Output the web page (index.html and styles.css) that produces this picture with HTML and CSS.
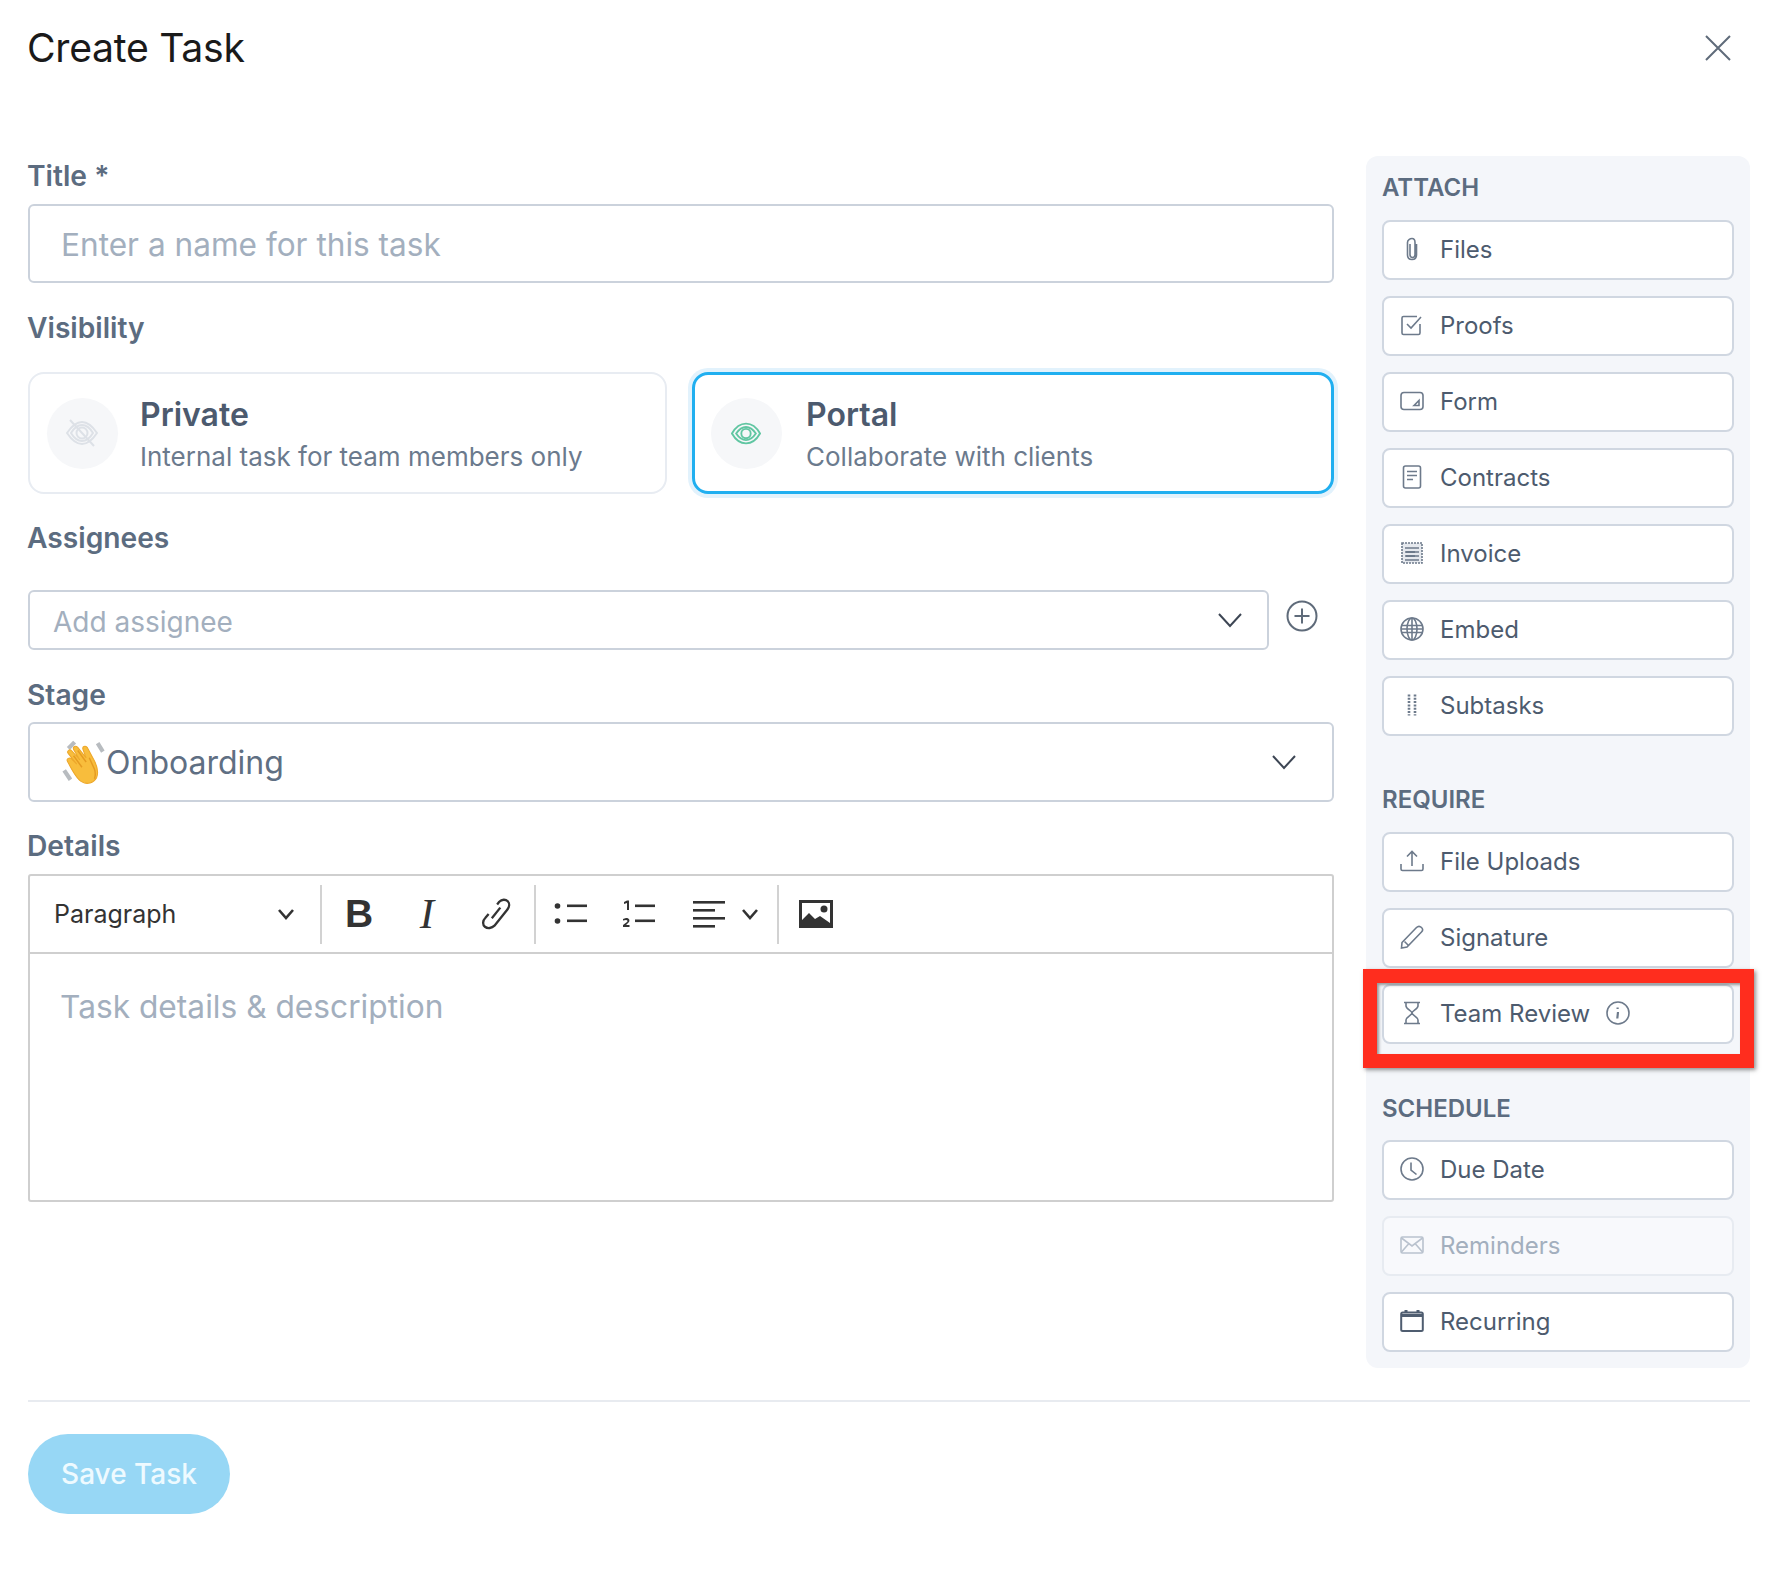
FILE: index.html
```html
<!DOCTYPE html>
<html lang="en">
<head>
<meta charset="utf-8">
<title>Create Task</title>
<link rel="stylesheet" href="styles.css">
</head>
<body>
<div class="modal">
  <header class="head">
    <h1 class="head-title">Create Task</h1>
    <svg class="close" viewBox="0 0 28 28"><path d="M2 2l24 24M26 2L2 26"/></svg>
  </header>
  <div class="body">
    <main class="form">
      <div class="label l-title">Title *</div>
      <div class="field f-title">Enter a name for this task</div>
      <div class="label l-vis">Visibility</div>
      <div class="cards">
        <div class="card">
          <div class="bubble">
            <svg class="eye off" viewBox="0 0 32 32"><path d="M1 16C5 10 10 5 16 5s11 5 15 11c-4 6-9 11-15 11S5 22 1 16z"/><path d="M5 16c3-5 7-8 11-8s8 3 11 8c-3 5-7 8-11 8s-8-3-11-8z"/><circle cx="16" cy="16" r="5.5"/><path d="M4 3l24 26"/></svg>
          </div>
          <div class="card-text"><div class="card-name">Private</div><div class="card-sub">Internal task for team members only</div></div>
        </div>
        <div class="card on">
          <div class="bubble">
            <svg class="eye" viewBox="0 0 32 24"><path d="M1 12C5 5 10 1.500 16 1.500S27 5 31 12c-4 7-9 10.500-15 10.500S5 19 1 12z"/><path d="M5.500 12C8.500 7.500 12 5 16 5s7.500 2.500 10.500 7C23.500 16.500 20 19 16 19s-7.500-2.500-10.500-7z"/><circle cx="16" cy="12" r="5"/></svg>
          </div>
          <div class="card-text"><div class="card-name">Portal</div><div class="card-sub">Collaborate with clients</div></div>
        </div>
      </div>
      <div class="label l-assign">Assignees</div>
      <div class="assign-row">
        <div class="field f-assign"><span>Add assignee</span><svg class="chev" viewBox="0 0 26 16"><path d="M2 2l11 12L24 2"/></svg></div>
        <svg class="plus" viewBox="0 0 32 32"><circle cx="16" cy="16" r="14.500"/><path d="M16 8.500v15M8.500 16h15"/></svg>
      </div>
      <div class="label l-stage">Stage</div>
      <div class="field f-stage">
        <span class="stage-val">
          <svg class="wave" viewBox="0 0 44 44">
            <path class="wave-m" d="M14 3l-6 6M36 4l5 8M4 30l6 9"/>
            <path class="wave-h" d="M7 21c-1-2 2-4 4-2l5 5-8-10c-2-2 1-5 3-3l8 9-6-10c-1-3 2-4 4-2l8 10-3-8c-1-3 2-4 4-2l7 13c3 6 4 11 2 16-3 5-9 7-14 4-5-2-10-12-14-20z"/>
            <path class="wave-l" d="M28 18l5 11c1 3 1 6 0 9M13 16l8 11M17 11l8 11"/>
          </svg>
          <span>Onboarding</span>
        </span>
        <svg class="chev" viewBox="0 0 26 16"><path d="M2 2l11 12L24 2"/></svg>
      </div>
      <div class="label l-details">Details</div>
      <div class="editor">
        <div class="toolbar">
          <div class="tb-para"><span>Paragraph</span><svg class="mini" viewBox="0 0 18 12"><path d="M2 2l7 8 7-8"/></svg></div>
          <i class="tb-div"></i>
          <div class="tb-group g-a">
            <span class="tb-btn tb-b">B</span>
            <span class="tb-btn tb-i">I</span>
            <span class="tb-btn"><svg class="tool line" viewBox="0 0 32 32"><path d="M18 7l2-2.500c2.500-2.500 6-2.500 8-.5s1.500 5.500-.5 8l-12 15c-2.500 2.500-6.500 3-9 1s-2-6 .5-8.500l3-3.500"/><path d="M13 20l8-10"/></svg></span>
          </div>
          <i class="tb-div"></i>
          <div class="tb-group g-b">
            <span class="tb-btn"><svg class="tool" viewBox="0 0 34 28"><circle cx="3.500" cy="6" r="2.800"/><circle cx="3.500" cy="21" r="2.800"/><rect x="13" y="4.500" width="20" height="2.600"/><rect x="13" y="19.500" width="20" height="2.600"/></svg></span>
            <span class="tb-btn"><svg class="tool" viewBox="0 0 34 28"><rect x="13" y="4.500" width="20" height="2.600"/><rect x="13" y="19.500" width="20" height="2.600"/><path d="M2 2l3-1.500h2v9.500H5V3L2 4zM1 27v-2l4-3c1-1 .5-2-1-2l-3 .5V19l3-1c3 0 4 2 3 4l-3 3h3.500v2z"/></svg></span>
            <span class="tb-btn tb-align"><svg class="tool" viewBox="0 0 32 28"><rect x="0" y="1" width="32" height="2.600"/><rect x="0" y="9" width="22" height="2.600"/><rect x="0" y="17" width="32" height="2.600"/><rect x="0" y="25" width="22" height="2.600"/></svg><svg class="mini" viewBox="0 0 18 12"><path d="M2 2l7 8 7-8"/></svg></span>
          </div>
          <i class="tb-div"></i>
          <div class="tb-group g-c">
            <span class="tb-btn"><svg class="tool tool-img" viewBox="0 0 34 28"><path fill-rule="evenodd" d="M0 0h34v28H0zM3 3v17l7-7 6 6 5-3 10 7V3z"/><circle cx="25" cy="9" r="3.500"/></svg></span>
          </div>
        </div>
        <div class="editor-body">Task details &amp; description</div>
      </div>
    </main>
    <aside class="side">
      <div class="side-h">ATTACH</div>
      <div class="side-list">
        <div class="opt"><svg class="ic" viewBox="0 0 24 24"><path d="M10 7v10.500c0 2 1 3 2.500 3s2.500-1 2.500-3V5.500C15 3 14 1.500 12 1.500S7.500 3 7.500 5.500V18c0 3 2 4.500 4.500 4.500s4.500-1.500 4.500-4.500V7"/></svg><span>Files</span></div>
        <div class="opt"><svg class="ic" viewBox="0 0 24 24"><path d="M20 11v9c0 1-.6 1.500-1.500 1.500h-15C2.600 21.500 2 21 2 20V5c0-1 .6-1.500 1.500-1.500H17"/><path d="M7 11l4 4 10-11"/></svg><span>Proofs</span></div>
        <div class="opt"><svg class="ic" viewBox="0 0 24 24"><rect x="1" y="3.500" width="22" height="17" rx="3"/><path d="M14 16.500l5-5v5z"/></svg><span>Form</span></div>
        <div class="opt"><svg class="ic" viewBox="0 0 24 24"><rect x="3.500" y="1" width="17" height="22" rx="2"/><path d="M7 6.500h10M7 10.500h10M7 14.500h6"/></svg><span>Contracts</span></div>
        <div class="opt"><svg class="ic" viewBox="0 0 24 24"><rect x="2" y="2" width="20" height="20" fill="#e6e9ee" stroke-dasharray="2 1"/><path d="M5 7h14M5 11h14M5 15h14M5 19h14"/><path class="strong" d="M6 11h9M6 15h9"/></svg><span>Invoice</span></div>
        <div class="opt"><svg class="ic" viewBox="0 0 24 24"><circle cx="12" cy="12" r="11"/><ellipse cx="12" cy="12" rx="5" ry="11"/><path d="M12 1v22M1.500 8.500h21M1.500 15.500h21M1 12h22"/></svg><span>Embed</span></div>
        <div class="opt"><svg class="ic" viewBox="0 0 24 24"><path d="M9 1.500v21M15 1.500v21" stroke-width="2.600" stroke-dasharray="2 1.300"/></svg><span>Subtasks</span></div>
      </div>
      <div class="side-h h-2">REQUIRE</div>
      <div class="side-list">
        <div class="opt"><svg class="ic" viewBox="0 0 24 24"><path d="M1 15v5c0 1 .5 1.500 1.500 1.500h19c1 0 1.500-.5 1.500-1.500v-5"/><path d="M12 17V2.500M7 7.500l5-5 5 5"/></svg><span>File Uploads</span></div>
        <div class="opt"><svg class="ic" viewBox="0 0 24 24"><path d="M2 17.500L16.500 2.500c1.500-1.500 3.500-1.500 5 0s1.500 3 0 4.500L7 22l-5.500 1z"/><path d="M4.500 16.500l4 4"/></svg><span>Signature</span></div>
        <div class="opt"><svg class="ic" viewBox="0 0 24 24"><path d="M4 1.500h16M4 22.500h16"/><path d="M6 2v3c0 3 6 5 6 7s-6 4-6 7v3M18 2v3c0 3-6 5-6 7s6 4 6 7v3"/></svg><span>Team Review</span><svg class="ic info" viewBox="0 0 24 24"><circle cx="12" cy="12" r="11"/><path class="strong" d="M12 11l-.7 6.500M11.600 6.500v1.500"/></svg></div>
      </div>
      <div class="side-h h-3">SCHEDULE</div>
      <div class="side-list">
        <div class="opt"><svg class="ic" viewBox="0 0 24 24"><circle cx="12" cy="12" r="11"/><path d="M11 5.500V13l5.500 4.500"/></svg><span>Due Date</span></div>
        <div class="opt muted"><svg class="ic" viewBox="0 0 24 24"><rect x="1" y="4" width="22" height="16" rx="1.500"/><path d="M1.500 5l10.500 8 10.500-8M1.500 19l7-8M22.500 19l-7-8"/></svg><span>Reminders</span></div>
        <div class="opt"><svg class="ic ic-cal" viewBox="0 0 24 24"><rect x="1.200" y="3.500" width="21.600" height="18.500" rx="1.500"/><path d="M1.500 6.500h21M6 1v3M18 1v3" stroke-width="3"/></svg><span>Recurring</span></div>
      </div>
    </aside>
  </div>
  <div class="rule"></div>
  <button class="save">Save Task</button>
</div>
<div class="callout"></div>
</body>
</html>
```

FILE: styles.css
```css
* { box-sizing: border-box; }
html, body { margin: 0; padding: 0; background: #fff; }
body { font-family: Inter, "Liberation Sans", sans-serif; position: relative; width: 1774px; height: 1578px; overflow: hidden; }
.modal { padding: 0 24px 0 28px; }
.head { height: 156px; display: flex; justify-content: space-between; align-items: flex-start; }
.head-title { margin: 24px 0 0 -1px; font-size: 39.200px; line-height: 48px; font-weight: 400; color: #1a1a1a; letter-spacing: -0.3px; }
.close { width: 28px; height: 28px; margin: 34px 18px 0 0; fill: none; stroke: #5f6b7a; stroke-width: 2; }
.body { display: grid; grid-template-columns: 1306px 384px; column-gap: 32px; }
.form { display: flex; flex-direction: column; }
.label { font-size: 28.200px; line-height: 40px; height: 40px; margin-left: -1px; font-weight: 600; color: #5c6c80; }
.l-title { margin-bottom: 8px; }
.l-vis { margin-top: 25px; margin-bottom: 24px; }
.l-assign { margin-top: 24px; margin-bottom: 32px; }
.l-stage { margin-top: 25px; margin-bottom: 7px; }
.l-details { margin-top: 24px; margin-bottom: 8px; }
.field { border: 2px solid #cbd2dc; border-radius: 6px; color: #a3afbe; display: flex; align-items: center; justify-content: space-between; background: #fff; }
.f-title { height: 79px; padding: 2px 0 0 31px; font-size: 31.600px; }
.cards { display: grid; grid-template-columns: 639px 642px; column-gap: 25px; }
.card { height: 122px; border: 2px solid #e8ecf2; border-radius: 16px; padding: 0 0 0 17px; display: flex; align-items: center; gap: 22px; }
.card.on { border: 3px solid #20aff0; padding-left: 16px; gap: 24px; box-shadow: 0 0 0 4px #e2f2fc; }
.bubble { width: 71px; height: 71px; border-radius: 50%; background: #f6f7f9; display: flex; align-items: center; justify-content: center; flex: none; }
.eye { width: 30px; height: 23px; margin-left: -1px; fill: none; stroke: #60c6a2; stroke-width: 2; }
.eye.off { width: 32px; height: 32px; stroke: #dde1e7; }
.card-text { display: flex; flex-direction: column; padding-top: 3px; }
.card-name { font-size: 32px; line-height: 44px; font-weight: 600; color: #4c5a6e; }
.card-sub { font-size: 26px; line-height: 40px; color: #6b7a8d; }
.assign-row { display: flex; align-items: flex-start; }
.f-assign { width: 1241px; height: 60px; padding: 4px 24px 0 23px; font-size: 28px; }
.f-assign .chev { margin-top: -4px; }
.chev { width: 26px; height: 16px; fill: none; stroke: #3d4654; stroke-width: 2; }
.plus { width: 32px; height: 32px; margin: 10px 0 0 17px; fill: none; stroke: #5f6b7a; stroke-width: 2; }
.f-stage { height: 80px; padding: 0 35px 0 30px; font-size: 32px; color: #5f6f83; }
.stage-val { display: flex; align-items: center; gap: 0; }
.wave { width: 46px; height: 46px; flex: none; fill: none; }
.wave-m { stroke: #b8bcc0; stroke-width: 4; }
.wave-h { fill: #f8bd3c; stroke: #eda72a; stroke-width: 1; }
.wave-l { stroke: #e59b22; stroke-width: 1.400; }
.editor { height: 328px; border: 2px solid #cfcfcf; border-radius: 3px; display: flex; flex-direction: column; }
.toolbar { height: 78px; border-bottom: 2px solid #cfcfcf; display: flex; align-items: center; flex: none; }
.tb-para { width: 290px; display: flex; align-items: center; justify-content: space-between; padding: 0 24px 0 24px; font-size: 25px; color: #333; }
.tb-para .mini { margin-right: 1px; }
.tb-div { width: 2px; height: 59px; background: #d2d2d2; flex: none; }
.tb-group { display: flex; align-items: center; }
.g-a { padding: 0 5px 0 3px; }
.g-b { padding: 0 0 0 1px; }
.g-c { padding: 0 0 0 3px; }
.tb-btn { width: 68px; display: flex; align-items: center; justify-content: center; gap: 16px; color: #333; }
.tb-b { font-family: "Liberation Sans", sans-serif; font-weight: 700; font-size: 39px; line-height: 44px; }
.tb-i { font-family: "Liberation Serif", serif; font-style: italic; font-size: 43px; line-height: 44px; }
.tb-align { width: 104px; justify-content: flex-start; padding-left: 20px; }
.tool { width: 34px; height: 28px; fill: #333; }
.tool.line { width: 34px; height: 34px; fill: none; stroke: #333; stroke-width: 2.200; }
.tb-align .tool { width: 32px; }
.mini { width: 18px; height: 12px; fill: none; stroke: #333; stroke-width: 2.600; flex: none; }
.editor-body { padding: 30px 0 0 30px; font-size: 31.700px; line-height: 46px; color: #a3afbe; }
.side { background: #f4f6fa; border-radius: 12px; padding: 15px 16px 16px; height: 1212px; }
.side-h { font-size: 24px; line-height: 34px; height: 34px; font-weight: 600; color: #5c6c80; margin-bottom: 15px; }
.h-2 { margin-top: 47px; }
.h-3 { margin-top: 48px; margin-bottom: 14px; }
.side-list { display: flex; flex-direction: column; gap: 16px; }
.opt { height: 60px; border: 2px solid #d0d7e1; border-radius: 8px; background: #fff; padding: 0 0 2px 16px; display: flex; align-items: center; gap: 16px; font-size: 24px; color: #4d5b6e; }
.ic { width: 24px; height: 24px; flex: none; fill: none; stroke: #6d7a8b; stroke-width: 1.600; }
.ic .strong { stroke-width: 2.200; stroke: #6d7a8b; }
.info { margin-left: 0; }
.ic-cal { stroke: #4f5d70; stroke-width: 2; }
.opt.muted { border-color: #e7ebf1; background: #f8f9fc; color: #a3afbe; }
.muted .ic { stroke: #b9c2ce; }
.rule { height: 2px; background: #e8ebf0; margin-top: 32px; }
.save { display: block; margin-top: 32px; width: 202px; height: 80px; border: 0; border-radius: 40px; background: #97d7f5; color: #eefaff; font-family: Inter, sans-serif; font-size: 28px; font-weight: 500; padding: 0; }
.callout { position: absolute; left: 1363px; top: 969px; width: 391px; height: 99px; border: 14px solid #ff2d1e; box-shadow: 2px 2px 4px rgba(60,60,60,.55), inset 2px 2px 3px rgba(60,60,60,.5); }
```
